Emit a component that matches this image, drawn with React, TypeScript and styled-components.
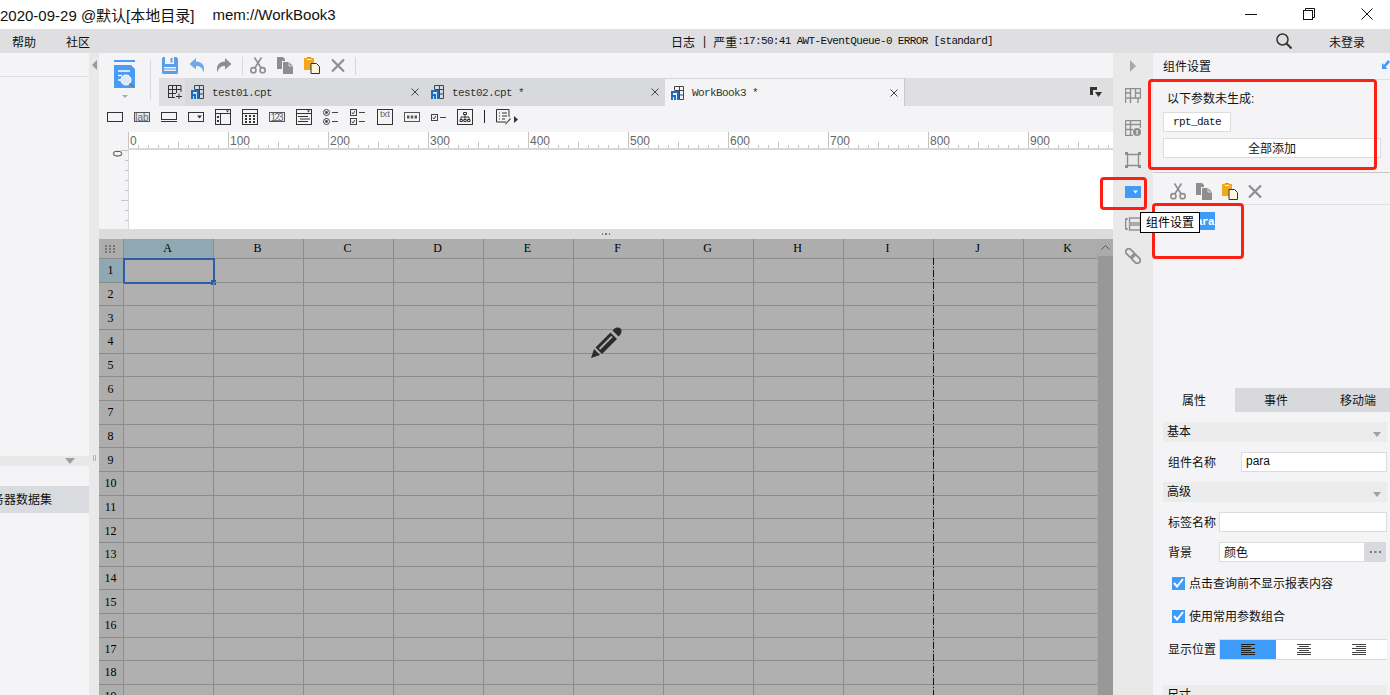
import React from "react";
import styled, { createGlobalStyle } from "styled-components";

const CJK = `"Liberation Sans", "Noto Sans CJK SC", sans-serif`;
const MONO = `"Liberation Mono", "Noto Sans CJK SC", monospace`;

const GlobalStyle = createGlobalStyle`
    html, body {
        margin: 0;
        padding: 0;
        background: #fff;
        overflow: hidden;
    }
    * {
        box-sizing: border-box;
    }
`;

const Page = styled.div`
    position: relative;
    width: 1390px;
    height: 695px;
    overflow: hidden;
    display: flex;
    flex-direction: column;
    font-family: ${CJK};
    font-size: 12px;
    color: #111;
    background: #f4f4f7;
`;

/* title bar */
const TitleBar = styled.div`
    height: 29px;
    flex: none;
    background: #fff;
    display: flex;
    align-items: center;
    font-size: 15px;
    white-space: pre;
    padding-bottom: 1px;
`;

const TitleName = styled.span`
    margin-left: 18px;
`;

const WindowButtons = styled.div`
    margin-left: auto;
    display: flex;
    gap: 46px;
    padding-right: 17px;
    align-items: center;
    svg {
        display: block;
    }
`;

/* menu bar */
const MenuBar = styled.div`
    height: 24px;
    flex: none;
    background: #dfdfe1;
    display: flex;
    align-items: center;
`;

const MenuItems = styled.div`
    width: 671px;
    flex: none;
    display: flex;
    gap: 30px;
    padding-left: 12px;
`;

const LogText = styled.div`
    display: flex;
    align-items: center;
    white-space: pre;
`;

const LogSep = styled.span`
    margin: 0 7px 0 8px;
`;

const LogMono = styled.span`
    font-family: ${MONO};
    font-size: 11px;
    letter-spacing: -0.65px;
`;

const MenuRight = styled.div`
    margin-left: auto;
    display: flex;
    align-items: center;
    gap: 37px;
    padding-right: 25px;
`;

/* main row */
const Main = styled.div`
    flex: 1;
    min-height: 0;
    display: flex;
`;

const LeftPanel = styled.div`
    width: 89px;
    flex: none;
    overflow: hidden;
    display: flex;
    flex-direction: column;
`;

const LeftHeader = styled.div`
    height: 24px;
    flex: none;
    border-bottom: 1px solid #e0e0e2;
`;

const LeftBody = styled.div`
    flex: 1;
    max-height: 379px;
`;

const LeftBand = styled.div`
    height: 10px;
    flex: none;
    background: #e8e8e8;
    display: flex;
    justify-content: flex-end;
    align-items: center;
    padding-right: 14px;
`;

const SelectedItem = styled.div`
    height: 27px;
    flex: none;
    margin-top: 20px;
    background: #dadbde;
    display: flex;
    justify-content: flex-end;
    align-items: center;
    padding: 0 37px 2px 0;
    white-space: nowrap;
    font-size: 12px;
`;

const Gutter = styled.div`
    width: 10px;
    flex: none;
    background: #e9e9e9;
    position: relative;
    display: flex;
    flex-direction: column;
    align-items: center;
    padding-top: 7px;
    svg {
        display: block;
    }
`;

const GutterGrip = styled.div`
    margin-top: 385px;
    width: 3px;
    height: 6px;
    border-left: 1px solid #b5b5b5;
    border-right: 1px solid #b5b5b5;
`;

/* center */
const Center = styled.div`
    width: 1014px;
    flex: none;
    display: flex;
    flex-direction: column;
    min-height: 0;
`;

const TopArea = styled.div`
    height: 53px;
    flex: none;
    display: flex;
`;

const BigIconCol = styled.div`
    width: 60px;
    flex: none;
    padding: 7px 0 0 15px;
    svg {
        display: block;
    }
`;

const TopRight = styled.div`
    flex: 1;
    display: flex;
    flex-direction: column;
    min-width: 0;
`;

const ActionRow = styled.div`
    height: 25px;
    flex: none;
    display: flex;
    align-items: flex-start;
    padding-top: 4px;
    padding-left: 3px;
    gap: 11px;
    svg {
        display: block;
    }
`;

const ToolSep = styled.div<{ $last?: boolean }>`
    width: 1px;
    height: 18px;
    background: #d8d8da;
    margin: 0 ${(p) => (p.$last ? 0 : -4)}px 0 -1px;
`;

const TabStrip = styled.div`
    height: 28px;
    flex: none;
    display: flex;
    background: #dfdfe1;
`;

const AddTab = styled.div`
    width: 26px;
    flex: none;
    display: flex;
    align-items: center;
    padding-left: 9px;
    svg {
        display: block;
    }
`;

const Tab = styled.div<{ $active?: boolean }>`
    width: 240px;
    flex: none;
    display: flex;
    align-items: center;
    padding: 0 6px;
    gap: 8px;
    font-family: ${MONO};
    font-size: 11px;
    letter-spacing: -0.6px;
    color: #333;
    background: ${(p) => (p.$active ? "#f4f4f7" : "#d8d9dc")};
    border-top: ${(p) => (p.$active ? "1px solid #d4d4d6" : "none")};
    border-right: ${(p) => (p.$active ? "1px solid #c8c8ca" : "none")};
    svg {
        display: block;
        flex: none;
    }
`;

const TabName = styled.span`
    flex: 1;
    white-space: pre;
    padding-top: 1px;
`;

const TabMenu = styled.div`
    margin-left: auto;
    padding: 9px 11px 0 0;
    svg {
        display: block;
    }
`;

const WidgetRow = styled.div`
    height: 26px;
    flex: none;
    display: flex;
    align-items: center;
    padding: 0 0 5px 8px;
    gap: 11px;
    svg {
        display: block;
        flex: none;
    }
`;

const RulerRow = styled.div`
    height: 18px;
    flex: none;
    padding-left: 29px;
    svg {
        display: block;
    }
`;

const CanvasRow = styled.div`
    height: 79px;
    flex: none;
    display: flex;
    padding-left: 13px;
    svg {
        display: block;
        flex: none;
    }
`;

const Canvas = styled.div`
    flex: 1;
    background: #fff;
`;

const Divider = styled.div`
    height: 10px;
    flex: none;
    background: #dcdcdd;
    display: flex;
    align-items: center;
    justify-content: center;
`;

const DividerDots = styled.span`
    width: 9px;
    height: 2px;
    background: repeating-linear-gradient(90deg, #777 0 1.5px, transparent 1.5px 3.5px);
`;

/* spreadsheet */
const SheetWrap = styled.div`
    flex: 1;
    min-height: 0;
    display: flex;
    position: relative;
    overflow: hidden;
`;

const Sheet = styled.div`
    width: 998px;
    flex: none;
    display: grid;
    grid-template-columns: 25px repeat(11, 90px);
    grid-template-rows: 20px;
    grid-auto-rows: 23.667px;
    background: #b0b0b0;
    overflow: hidden;
    align-content: start;
`;

const HeadCell = styled.div<{ $active?: boolean; $row?: boolean }>`
    display: flex;
    align-items: center;
    justify-content: center;
    padding: ${(p) => (p.$row ? "1px 1px 0 0" : "0 2px 0 0")};
    background: ${(p) => (p.$active ? "#90a8b2" : "#adadad")};
    border-right: 1px solid #8c8c8c;
    border-bottom: 1px solid #8c8c8c;
    font-family: "Liberation Serif", serif;
    font-size: 12px;
    color: #000;
    position: relative;
    svg {
        display: block;
    }
`;

const Cell = styled.div`
    position: relative;
    border-right: 1px solid #8c8c8c;
    border-bottom: 1px solid #8c8c8c;
`;

const Selection = styled.div`
    position: absolute;
    inset: -1px -2px -2px -1px;
    border: 2px solid #2a5fa8;
`;

const SelectionHandle = styled.div`
    position: absolute;
    right: -3px;
    bottom: -3px;
    width: 5px;
    height: 5px;
    background: #2a5fa8;
`;

const PageBreak = styled.div`
    position: absolute;
    left: 834px;
    top: 19px;
    bottom: 0;
    width: 1px;
    background: repeating-linear-gradient(180deg, #111 0 7px, transparent 7px 9px, #111 9px 10px, transparent 10px 12px);
`;

const Pencil = styled.div`
    position: absolute;
    left: 491px;
    top: 88px;
    svg {
        display: block;
    }
`;

const Scrollbar = styled.div`
    width: 16px;
    flex: none;
    background: #989898;
    border-left: 1px solid #a8a8a8;
`;

const ScrollUp = styled.div`
    height: 17px;
    background: #ababab;
    display: flex;
    align-items: center;
    justify-content: center;
    svg {
        display: block;
    }
`;

/* right strip */
const RightStrip = styled.div`
    width: 40px;
    flex: none;
    background: #e9e9e9;
    display: flex;
    flex-direction: column;
    align-items: center;
    padding-top: 7px;
    gap: 16px;
    svg {
        display: block;
    }
`;

/* right panel */
const RightPanel = styled.div`
    width: 237px;
    flex: none;
    overflow: hidden;
    display: flex;
    flex-direction: column;
`;

const PanelHead = styled.div`
    height: 27px;
    flex: none;
    display: flex;
    align-items: center;
    justify-content: space-between;
    padding: 0 0 2px 10px;
    border-bottom: 1px solid #e0e0e2;
    svg {
        display: block;
    }
`;

const ParamSection = styled.div`
    height: 93px;
    flex: none;
    padding: 11px 9px 0 10px;
    border-bottom: 1px solid #cbc7bf;
`;

const ParamTitle = styled.div`
    padding-left: 4px;
    height: 16px;
    line-height: 16px;
`;

const ParamChip = styled.div`
    margin-top: 5px;
    width: 68px;
    height: 20px;
    display: flex;
    align-items: center;
    justify-content: center;
    background: #fff;
    border: 1px solid #dcdcdc;
    font-family: ${MONO};
    font-size: 11px;
    letter-spacing: -0.6px;
`;

const AddAllButton = styled.div`
    margin-top: 6px;
    height: 20px;
    display: flex;
    align-items: center;
    justify-content: center;
    padding-bottom: 2px;
    background: #fff;
    border: 1px solid #dcdcdc;
`;

const PanelTools = styled.div`
    height: 32px;
    flex: none;
    display: flex;
    align-items: center;
    gap: 10px;
    padding: 5px 0 0 17px;
    border-bottom: 1px solid #e0e0e2;
    svg {
        display: block;
    }
`;

const WidgetList = styled.div`
    flex: 1;
    padding: 7px 0 0 37px;
`;

const WidgetChip = styled.div`
    width: 25px;
    height: 18px;
    display: flex;
    align-items: center;
    justify-content: flex-end;
    padding: 1px 1px 0 0;
    background: #3f9bf8;
    color: #fff;
    font-family: ${MONO};
    font-size: 11px;
    font-weight: bold;
    letter-spacing: -0.6px;
`;

const PropTabs = styled.div`
    height: 24px;
    flex: none;
    display: flex;
    background: #d8d9dc;
`;

const PropTab = styled.div<{ $active?: boolean }>`
    width: 82px;
    flex: none;
    display: flex;
    align-items: center;
    justify-content: center;
    padding-bottom: 2px;
    background: ${(p) => (p.$active ? "#f4f4f7" : "transparent")};
`;

const Form = styled.div`
    flex: none;
    height: 283px;
    padding: 10px 3px 0 10px;
    display: flex;
    flex-direction: column;
`;

const SectionBand = styled.div<{ $top?: number }>`
    height: 20px;
    flex: none;
    margin-top: ${(p) => p.$top ?? 0}px;
    background: #ececec;
    display: flex;
    align-items: center;
    justify-content: space-between;
    padding: 0 6px 0 4px;
    svg {
        display: block;
        margin-top: 4px;
    }
`;

const BandTitle = styled.span`
    margin-bottom: 3px;
`;

const FormRow = styled.div<{ $top?: number; $height?: number }>`
    height: ${(p) => p.$height ?? 20}px;
    flex: none;
    margin-top: ${(p) => p.$top ?? 10}px;
    display: flex;
    align-items: center;
`;

const FieldLabel = styled.div<{ $width: number }>`
    width: ${(p) => p.$width}px;
    flex: none;
    padding: 0 0 2px 5px;
`;

const Field = styled.div`
    flex: 1;
    height: 20px;
    background: #fff;
    border: 1px solid #dcdcdc;
    display: flex;
    align-items: center;
    padding: 0 0 2px 4px;
    font-size: 12px;
    min-width: 0;
`;

const MoreButton = styled.div`
    width: 21px;
    flex: none;
    height: 20px;
    margin-right: 1px;
    background: #d8d9dc;
    display: flex;
    align-items: center;
    justify-content: center;
    svg {
        display: block;
    }
`;

const CheckRow = styled.div<{ $top: number }>`
    height: 20px;
    flex: none;
    margin-top: ${(p) => p.$top}px;
    padding-left: 9px;
    display: flex;
    align-items: center;
    gap: 4px;
`;

const CheckText = styled.span`
    margin-bottom: 2px;
`;

const CheckBox = styled.span`
    width: 13px;
    height: 13px;
    flex: none;
    background: #3f9bf8;
    display: flex;
    align-items: center;
    justify-content: center;
    svg {
        display: block;
    }
`;

const Segments = styled.div`
    flex: 1;
    height: 21px;
    display: flex;
    background: #fff;
    border: 1px solid #dcdcdc;
    border-right: none;
`;

const Segment = styled.div<{ $active?: boolean }>`
    flex: 1;
    display: flex;
    align-items: center;
    justify-content: center;
    background: ${(p) => (p.$active ? "#3f9bf8" : "#fff")};
    svg {
        display: block;
    }
`;

/* things lying over the page */
const RedBox = styled.div<{ $x: number; $y: number; $w: number; $h: number }>`
    position: absolute;
    left: ${(p) => p.$x}px;
    top: ${(p) => p.$y}px;
    width: ${(p) => p.$w}px;
    height: ${(p) => p.$h}px;
    border: 3px solid #fb1f14;
    border-radius: 4px;
`;

const Tooltip = styled.div`
    position: absolute;
    left: 1140px;
    top: 212px;
    width: 60px;
    height: 21px;
    background: #fff;
    border: 1px solid #000;
    display: flex;
    align-items: center;
    justify-content: center;
    padding-bottom: 2px;
    font-size: 12px;
    white-space: nowrap;
    color: #000;
`;

const GRAY = "#8e8e8e";

const SaveIcon = () => (
    <svg width="16" height="17" viewBox="0 0 16 17">
        <path d="M1.5 0H14.5L16 1.5V15.5Q16 17 14.5 17H1.5Q0 17 0 15.5V1.5Q0 0 1.5 0Z" fill="#5a9fe8" />
        <rect x="3" y="0" width="9" height="7" fill="#f4f4f7" />
        <rect x="8.5" y="1" width="2" height="4.5" fill="#5a9fe8" />
        <rect x="2" y="10" width="12" height="1.4" fill="#f4f4f7" />
        <rect x="2" y="12.5" width="12" height="1.4" fill="#f4f4f7" />
    </svg>
);

const UndoIcon = ({ color, flip }: { color: string; flip?: boolean }) => (
    <svg width="16" height="16" viewBox="0 0 16 16">
        <path
            d="M7 1L0.5 7L7 12.5V9C11 9 13.5 10.5 14.5 15.5C16.5 9 13 4.5 7 4.5Z"
            fill={color}
            transform={flip ? "matrix(-1 0 0 1 16 0)" : undefined}
        />
    </svg>
);

const CutIcon = () => (
    <svg width="16" height="17" viewBox="0 0 16 17">
        <g fill="none" stroke={GRAY} strokeWidth="1.6">
            <circle cx="3.4" cy="13.2" r="2.6" />
            <circle cx="12.6" cy="13.2" r="2.6" />
            <path d="M4.8 11L11.5 0.5M11.2 11L4.5 0.5" />
        </g>
    </svg>
);

const CopyIcon = () => (
    <svg width="16" height="17" viewBox="0 0 16 17">
        <path d="M0 0H6L8 2V4H5V12H0Z" fill={GRAY} />
        <path d="M6 5H12L16 9V17H6Z" fill={GRAY} />
        <path d="M12 5V9H16" fill="none" stroke="#f4f4f7" strokeWidth="0.8" />
    </svg>
);

const PasteIcon = () => (
    <svg width="16" height="17" viewBox="0 0 16 17">
        <path d="M0 1H10V7H7V13H0Z" fill="#f0a81f" />
        <rect x="3" y="0" width="4" height="1" fill="#e4801f" />
        <rect x="3" y="2" width="4" height="1" fill="#f4f4f7" />
        <path d="M7 6.5H12.5L15.5 9.5V16.5H7Z" fill="#fdf6df" stroke="#333" strokeWidth="1" />
    </svg>
);

const DeleteIcon = () => (
    <svg width="14" height="17" viewBox="0 0 14 17">
        <path d="M1 2.5L13 14.5M13 2.5L1 14.5" stroke={GRAY} strokeWidth="2.2" />
    </svg>
);

const ReportIcon = () => (
    <svg width="13" height="14" viewBox="0 0 13 14">
        <path d="M3.5 4V.5H12.5V13.5H8.5V.5M3.5 4.5H12.5M8.5 9H12.5" fill="none" stroke="#444" />
        <path d="M0 5H4V7H2V9H5V14H3V11H2V14H0Z" fill="#1c6cc0" />
        <path d="M4 5H8V14H6V7H4Z" fill="#1c6cc0" />
    </svg>
);

const TabClose = () => (
    <svg width="8" height="8" viewBox="0 0 8 8">
        <path d="M.5 .5L7.5 7.5M7.5 .5L.5 7.5" stroke="#444" strokeWidth="1" />
    </svg>
);

const INK = "#333";

const widgetIcons = [
    <svg key="label" width="16" height="12" viewBox="0 0 16 12">
        <rect x=".5" y="1.5" width="15" height="9" fill="none" stroke={INK} />
    </svg>,
    <svg key="lab" width="16" height="12" viewBox="0 0 16 12">
        <rect x=".5" y="1.5" width="15" height="9" fill="#e8e8e8" stroke="#555" />
        <text x="8" y="9.5" fontSize="10" textAnchor="middle" fill="#666" fontFamily="Liberation Sans">lab</text>
    </svg>,
    <svg key="input" width="16" height="12" viewBox="0 0 16 12">
        <rect x=".5" y="1.5" width="15" height="7" fill="none" stroke={INK} />
        <path d="M0 10.5H16" stroke={INK} />
    </svg>,
    <svg key="combo" width="16" height="12" viewBox="0 0 16 12">
        <rect x=".5" y="1.5" width="15" height="9" fill="none" stroke={INK} />
        <path d="M9 4.5H14L11.5 7.5Z" fill={INK} />
    </svg>,
    <svg key="tree" width="16" height="16" viewBox="0 0 16 16">
        <rect x=".5" y=".5" width="15" height="15" fill="none" stroke={INK} />
        <path d="M0 4.5H16M5.5 4.5V16" stroke={INK} />
        <path d="M11 1.5H14L12.5 3.5Z" fill={INK} />
        <path d="M2 7H4V9H2ZM2 11H4V13H2Z" fill={INK} />
    </svg>,
    <svg key="date" width="16" height="16" viewBox="0 0 16 16">
        <rect x=".5" y=".5" width="15" height="15" fill="none" stroke={INK} />
        <path d="M0 4.5H16" stroke={INK} />
        <path d="M3 6h2v2H3zM7 6h2v2H7zM11 6h2v2h-2zM3 9h2v2H3zM7 9h2v2H7zM11 9h2v2h-2zM3 12h2v2H3zM7 12h2v2H7zM11 12h2v2h-2z" fill={INK} />
    </svg>,
    <svg key="num" width="16" height="12" viewBox="0 0 16 12">
        <rect x=".5" y="1.5" width="15" height="9" fill="none" stroke="#555" />
        <text x="8" y="9.8" fontSize="10" textAnchor="middle" fill="#666" fontFamily="Liberation Sans" textLength="13">123</text>
    </svg>,
    <svg key="list" width="16" height="16" viewBox="0 0 16 16">
        <rect x=".5" y=".5" width="15" height="15" fill="none" stroke={INK} />
        <path d="M0 4.5H16M2 7.5H12M4 10H14M2 12.5H12" stroke={INK} />
        <path d="M11 1.5H14L12.5 3.5Z" fill={INK} />
    </svg>,
    <svg key="radio" width="16" height="16" viewBox="0 0 16 16">
        <g fill="none" stroke="#444">
            <circle cx="3.5" cy="3.5" r="3" />
            <circle cx="3.5" cy="12.5" r="3" />
        </g>
        <circle cx="3.5" cy="3.5" r="1.4" fill="#444" />
        <circle cx="3.5" cy="12.5" r="1.4" fill="#444" />
        <path d="M9 3.5H15M9 12.5H15" stroke="#444" />
    </svg>,
    <svg key="checks" width="16" height="16" viewBox="0 0 16 16">
        <rect x=".5" y=".5" width="6" height="6" fill="none" stroke="#444" />
        <rect x=".5" y="9.5" width="6" height="6" fill="none" stroke="#444" />
        <path d="M2 3.5L3 5L5 2M2 12.5L3 14L5 11M9 3.5H15M9 12.5H15" fill="none" stroke="#444" />
    </svg>,
    <svg key="txt" width="16" height="16" viewBox="0 0 16 16">
        <rect x=".5" y=".5" width="15" height="15" fill="none" stroke={INK} />
        <text x="8" y="8" fontSize="9.5" textAnchor="middle" fill="#666" fontFamily="Liberation Sans">txt</text>
    </svg>,
    <svg key="pass" width="16" height="12" viewBox="0 0 16 12">
        <rect x=".5" y="1.5" width="15" height="9" fill="none" stroke="#555" />
        <path d="M3 4.5h2.4v3H3zM6.8 4.5h2.4v3H6.8zM10.6 4.5h2.4v3h-2.4z" fill="#555" />
    </svg>,
    <svg key="check" width="15" height="12" viewBox="0 0 15 12">
        <rect x=".5" y="3.5" width="6" height="6" fill="none" stroke="#444" />
        <path d="M2 6.5L3 8L5 5M9 6.5H15" fill="none" stroke="#444" />
    </svg>,
    <svg key="org" width="16" height="16" viewBox="0 0 16 16">
        <rect x=".5" y=".5" width="15" height="15" fill="none" stroke={INK} />
        <path d="M6.5 3.5h3v2h-3zM3 10.5h2.4v2H3zM6.8 10.5h2.4v2H6.8zM10.6 10.5h2.4v2h-2.4zM8 5.5V10.5M4 10.5V8H12V10.5" fill="none" stroke={INK} />
    </svg>,
];

const rulerTicks = Array.from({ length: 99 }, (_, i) => i * 10);

const TopRuler = () => (
    <svg width="985" height="18" viewBox="0 0 985 18">
        <rect width="985" height="16" fill="#fff" />
        <rect y="16" width="985" height="2" fill="#d8d8da" />
        {rulerTicks.map((t) => {
            const h = t % 100 === 0 ? 16 : t % 50 === 0 ? 6 : 3;
            return <rect key={t} x={t} y={16 - h} width="1" height={h} fill="#c4c4c4" />;
        })}
        {rulerTicks
            .filter((t) => t % 100 === 0)
            .map((t) => (
                <text key={t} x={t + 2} y="13" fontSize="12" fill="#666" fontFamily="Liberation Sans">
                    {t}
                </text>
            ))}
    </svg>
);

const SideRuler = () => (
    <svg width="17" height="79" viewBox="0 0 17 79">
        <rect width="17" height="79" fill="#f4f4f7" />
        {Array.from({ length: 8 }, (_, i) => (
            <rect key={i} x={i % 5 === 0 ? 9 : 13} y={i * 10} width={i % 5 === 0 ? 8 : 4} height="1" fill="#c4c4c4" />
        ))}
        <rect x="16" width="1" height="79" fill="#d8d8da" />
        <text transform="translate(10 7) rotate(-90)" fontSize="12" fill="#555" fontFamily="Liberation Sans">0</text>
    </svg>
);

const columns = ["A", "B", "C", "D", "E", "F", "G", "H", "I", "J", "K"];
const rows = Array.from({ length: 19 }, (_, i) => i + 1);

const CaretDown = ({ color = "#a0a0a0", w = 10, h = 6 }: { color?: string; w?: number; h?: number }) => (
    <svg width={w} height={h} viewBox="0 0 10 6" preserveAspectRatio="none">
        <path d="M0 0H10L5 6Z" fill={color} />
    </svg>
);

const AlignIcon = ({ kind, color }: { kind: "left" | "center" | "right"; color: string }) => {
    const longPath = "M0 .5H14M0 4.5H14M0 8.5H14";
    const shortX = kind === "left" ? 0 : kind === "center" ? 2 : 4;
    return (
        <svg width="14" height="11" viewBox="0 0 14 11">
            <path d={longPath + " M0 10.5H14"} stroke={color} strokeWidth="1" />
            <path d={`M${shortX} 2.5H${shortX + 10}M${shortX} 6.5H${shortX + 10}`} stroke={color} strokeWidth="1" />
        </svg>
    );
};

const Check = () => (
    <svg width="11" height="10" viewBox="0 0 11 10">
        <path d="M1 5L4 8.5L10 1" fill="none" stroke="#fff" strokeWidth="2" />
    </svg>
);

export default function App() {
    return (
        <Page>
            <GlobalStyle />
            <TitleBar>
                2020-09-29 @默认[本地目录]
                <TitleName>mem://WorkBook3</TitleName>
                <WindowButtons>
                    <svg width="12" height="12" viewBox="0 0 12 12">
                        <path d="M0 6.5H12" stroke="#111" />
                    </svg>
                    <svg width="12" height="12" viewBox="0 0 12 12">
                        <rect x=".5" y="2.5" width="9" height="9" fill="none" stroke="#111" />
                        <path d="M2.5 2.5V.5H11.5V9.5H9.5" fill="none" stroke="#111" />
                    </svg>
                    <svg width="12" height="12" viewBox="0 0 12 12">
                        <path d="M.5 .5L11.5 11.5M11.5 .5L.5 11.5" stroke="#111" />
                    </svg>
                </WindowButtons>
            </TitleBar>

            <MenuBar>
                <MenuItems>
                    <span>帮助</span>
                    <span>社区</span>
                </MenuItems>
                <LogText>
                    日志
                    <LogSep>|</LogSep>
                    严重
                    <LogMono>:17:50:41 AWT-EventQueue-0 ERROR [standard]</LogMono>
                </LogText>
                <MenuRight>
                    <svg width="16" height="16" viewBox="0 0 16 16">
                        <circle cx="6.5" cy="6.5" r="5.5" fill="none" stroke="#333" strokeWidth="1.5" />
                        <path d="M10.5 10.5L15.5 15.5" stroke="#333" strokeWidth="2" />
                    </svg>
                    <span>未登录</span>
                </MenuRight>
            </MenuBar>

            <Main>
                <LeftPanel>
                    <LeftHeader />
                    <LeftBody />
                    <LeftBand>
                        <CaretDown />
                    </LeftBand>
                    <SelectedItem>服务器数据集</SelectedItem>
                </LeftPanel>

                <Gutter>
                    <svg width="5" height="10" viewBox="0 0 5 10">
                        <path d="M5 0V10L0 5Z" fill="#9a9a9a" />
                    </svg>
                    <GutterGrip />
                </Gutter>

                <Center>
                    <TopArea>
                        <BigIconCol>
                            <svg width="37" height="47" viewBox="0 0 37 47">
                                <rect width="21" height="2" fill="#4a9bf5" />
                                <path d="M0 5H17L21 9V28H0Z" fill="#4a9bf5" />
                                <path d="M4 11H16M4 15.5H8M4 20H7" stroke="#fff" strokeWidth="1.4" />
                                <circle cx="12" cy="20" r="5" fill="#dbe9f7" stroke="#fff" />
                                <path d="M15.5 23.5L20 27" stroke="#777" strokeWidth="1.5" />
                                <path d="M8 35H14L11 38Z" fill="#aaa" />
                                <rect x="36" width="1" height="40" fill="#d8d8da" />
                            </svg>
                        </BigIconCol>
                        <TopRight>
                            <ActionRow>
                                <SaveIcon />
                                <UndoIcon color="#6fa9ea" />
                                <UndoIcon color={GRAY} flip />
                                <ToolSep />
                                <CutIcon />
                                <CopyIcon />
                                <PasteIcon />
                                <DeleteIcon />
                                <ToolSep $last />
                            </ActionRow>
                            <TabStrip>
                                <AddTab>
                                    <svg width="14" height="14" viewBox="0 0 14 14">
                                        <path d="M.5 13V.5H13V7M4.5 .5V13M8.5 .5V8M.5 4.5H13M.5 8.5H8M.5 12.5H7M11 8.5V14M8 11.5H14" fill="none" stroke="#333" />
                                    </svg>
                                </AddTab>
                                <Tab>
                                    <ReportIcon />
                                    <TabName>test01.cpt</TabName>
                                    <TabClose />
                                </Tab>
                                <Tab>
                                    <ReportIcon />
                                    <TabName>test02.cpt *</TabName>
                                    <TabClose />
                                </Tab>
                                <Tab $active>
                                    <ReportIcon />
                                    <TabName>WorkBook3 *</TabName>
                                    <TabClose />
                                </Tab>
                                <TabMenu>
                                    <svg width="12" height="10" viewBox="0 0 12 10">
                                        <path d="M0 0H7V3H3V8H0Z" fill="#333" />
                                        <path d="M5 5H12L8.5 10Z" fill="#333" />
                                    </svg>
                                </TabMenu>
                            </TabStrip>
                        </TopRight>
                    </TopArea>

                    <WidgetRow>
                        {widgetIcons}
                        <svg width="1" height="13" viewBox="0 0 1 13">
                            <rect width="1" height="13" fill="#222" />
                        </svg>
                        <svg width="22" height="16" viewBox="0 0 22 16">
                            <path d="M10 13H.5V.5H13V8" fill="none" stroke={INK} />
                            <path d="M3 4H4M6 4H11M3 7H4M6 7H11M3 10H4M6 10H9" stroke={INK} />
                            <path d="M9 15L14 9L15 10L10 15.5Z" fill="#555" />
                            <path d="M18 7V14L22 10.5Z" fill={INK} />
                        </svg>
                    </WidgetRow>

                    <RulerRow>
                        <TopRuler />
                    </RulerRow>
                    <CanvasRow>
                        <SideRuler />
                        <Canvas />
                    </CanvasRow>
                    <Divider>
                        <DividerDots />
                    </Divider>

                    <SheetWrap>
                        <Sheet>
                            <HeadCell>
                                <svg width="11" height="8" viewBox="0 0 11 8">
                                    <path d="M0 0h2v2H0zM4 0h2v2H4zM8 0h2v2H8zM0 3h2v2H0zM4 3h2v2H4zM8 3h2v2H8zM0 6h2v2H0zM4 6h2v2H4zM8 6h2v2H8z" fill="#777" />
                                </svg>
                            </HeadCell>
                            {columns.map((c) => (
                                <HeadCell key={c} $active={c === "A"}>
                                    {c}
                                </HeadCell>
                            ))}
                            {rows.map((r) => (
                                <React.Fragment key={r}>
                                    <HeadCell $row $active={r === 1}>{r}</HeadCell>
                                    {columns.map((c) => (
                                        <Cell key={c}>
                                            {r === 1 && c === "A" && (
                                                <Selection>
                                                    <SelectionHandle />
                                                </Selection>
                                            )}
                                        </Cell>
                                    ))}
                                </React.Fragment>
                            ))}
                        </Sheet>
                        <Scrollbar>
                            <ScrollUp>
                                <svg width="9" height="5" viewBox="0 0 9 5">
                                    <path d="M.5 4.5L4.5 .5L8.5 4.5" fill="none" stroke="#555" />
                                </svg>
                            </ScrollUp>
                        </Scrollbar>
                        <PageBreak />
                        <Pencil>
                            <svg width="32" height="32" viewBox="0 0 32 32">
                                <path d="M1 31L4 22L10 28Z" fill="#2b2b2b" />
                                <path d="M5.5 20.5L20.5 5.5L27 12L12 27Z" fill="#2b2b2b" />
                                <path d="M9.5 22L22 9.5" stroke="#b0b0b0" strokeWidth="1.8" />
                                <path d="M22.5 3.5L24 2C26 0 29 0 30.5 1.5C32 3 32 6 30 8L28.5 9.5Z" fill="#2b2b2b" />
                            </svg>
                        </Pencil>
                    </SheetWrap>
                </Center>

                <RightStrip>
                    <svg width="8" height="12" viewBox="0 0 8 12">
                        <path d="M1 0V12L7 6Z" fill="#a8a8a8" />
                    </svg>
                    <svg width="16" height="16" viewBox="0 0 16 16">
                        <path d="M.5 15V.5H15.5V10H.5M5.5 .5V15M10.5 .5V10M13 10V15M.5 5H5M10.5 5H15.5" fill="none" stroke={GRAY} strokeWidth="1.4" />
                    </svg>
                    <svg width="16" height="16" viewBox="0 0 16 16">
                        <path d="M.5 .5H15.5V8M8 15.5H.5V.5M.5 4.5H15.5M5.5 .5V15M.5 9.5H8" fill="none" stroke={GRAY} strokeWidth="1.4" />
                        <circle cx="12" cy="12" r="4" fill={GRAY} />
                        <rect x="11.4" y="10" width="1.4" height="4.5" fill="#e9e9e9" />
                    </svg>
                    <svg width="16" height="16" viewBox="0 0 16 16">
                        <path d="M2.5 2.5H13.5V13.5H2.5Z" fill="none" stroke={GRAY} strokeWidth="1.4" />
                        <path d="M0 0h3v3H0zM13 0h3v3h-3zM0 13h3v3H0zM13 13h3v3h-3z" fill={GRAY} />
                    </svg>
                    <svg width="16" height="16" viewBox="0 0 16 16">
                        <rect y="2" width="16" height="12" fill="#3f9bf8" />
                        <path d="M8 6.5H13L10.5 9.5Z" fill="#fff" />
                    </svg>
                    <svg width="16" height="16" viewBox="0 0 16 16">
                        <path d="M3 3H.7V13H3" fill="none" stroke={GRAY} strokeWidth="1.4" />
                        <rect x="4.5" y="2" width="11" height="5" fill="none" stroke={GRAY} strokeWidth="1.4" />
                        <rect x="4.5" y="9" width="11" height="5" fill="none" stroke={GRAY} strokeWidth="1.4" />
                    </svg>
                    <svg width="16" height="16" viewBox="0 0 16 16">
                        <g fill="none" stroke={GRAY} strokeWidth="1.8" transform="rotate(45 8 8)">
                            <rect x="-1" y="5" width="10" height="6" rx="3" />
                            <rect x="7" y="5" width="10" height="6" rx="3" />
                        </g>
                    </svg>
                </RightStrip>

                <RightPanel>
                    <PanelHead>
                        <span>组件设置</span>
                        <svg width="8" height="10" viewBox="0 0 8 10">
                            <path d="M0 9V3L2 5L6 0L8 2L3.5 7L5.5 9Z" fill="#3f9bf8" />
                        </svg>
                    </PanelHead>
                    <ParamSection>
                        <ParamTitle>以下参数未生成:</ParamTitle>
                        <ParamChip>rpt_date</ParamChip>
                        <AddAllButton>全部添加</AddAllButton>
                    </ParamSection>
                    <PanelTools>
                        <CutIcon />
                        <CopyIcon />
                        <PasteIcon />
                        <DeleteIcon />
                    </PanelTools>
                    <WidgetList>
                        <WidgetChip>para</WidgetChip>
                    </WidgetList>
                    <PropTabs>
                        <PropTab $active>属性</PropTab>
                        <PropTab>事件</PropTab>
                        <PropTab>移动端</PropTab>
                    </PropTabs>
                    <Form>
                        <SectionBand>
                            <BandTitle>基本</BandTitle>
                            <CaretDown w={8} h={5} />
                        </SectionBand>
                        <FormRow>
                            <FieldLabel $width={78}>组件名称</FieldLabel>
                            <Field>para</Field>
                        </FormRow>
                        <SectionBand $top={10}>
                            <BandTitle>高级</BandTitle>
                            <CaretDown w={8} h={5} />
                        </SectionBand>
                        <FormRow>
                            <FieldLabel $width={56}>标签名称</FieldLabel>
                            <Field />
                        </FormRow>
                        <FormRow>
                            <FieldLabel $width={56}>背景</FieldLabel>
                            <Field>颜色</Field>
                            <MoreButton>
                                <svg width="11" height="2" viewBox="0 0 11 2">
                                    <path d="M0 0h2v2H0zM4.5 0h2v2h-2zM9 0h2v2H9z" fill="#777" />
                                </svg>
                            </MoreButton>
                        </FormRow>
                        <CheckRow $top={11}>
                            <CheckBox>
                                <Check />
                            </CheckBox>
                            <CheckText>点击查询前不显示报表内容</CheckText>
                        </CheckRow>
                        <CheckRow $top={13}>
                            <CheckBox>
                                <Check />
                            </CheckBox>
                            <CheckText>使用常用参数组合</CheckText>
                        </CheckRow>
                        <FormRow $top={13} $height={21}>
                            <FieldLabel $width={56}>显示位置</FieldLabel>
                            <Segments>
                                <Segment $active>
                                    <AlignIcon kind="left" color="#222" />
                                </Segment>
                                <Segment>
                                    <AlignIcon kind="center" color="#444" />
                                </Segment>
                                <Segment>
                                    <AlignIcon kind="right" color="#444" />
                                </Segment>
                            </Segments>
                        </FormRow>
                        <SectionBand $top={25}>
                            <BandTitle>尺寸</BandTitle>
                        </SectionBand>
                    </Form>
                </RightPanel>
            </Main>

            <RedBox $x={1148} $y={79} $w={229} $h={91} />
            <RedBox $x={1100} $y={177} $w={47} $h={33} />
            <RedBox $x={1152} $y={203} $w={92} $h={56} />
            <Tooltip>组件设置</Tooltip>
        </Page>
    );
}
